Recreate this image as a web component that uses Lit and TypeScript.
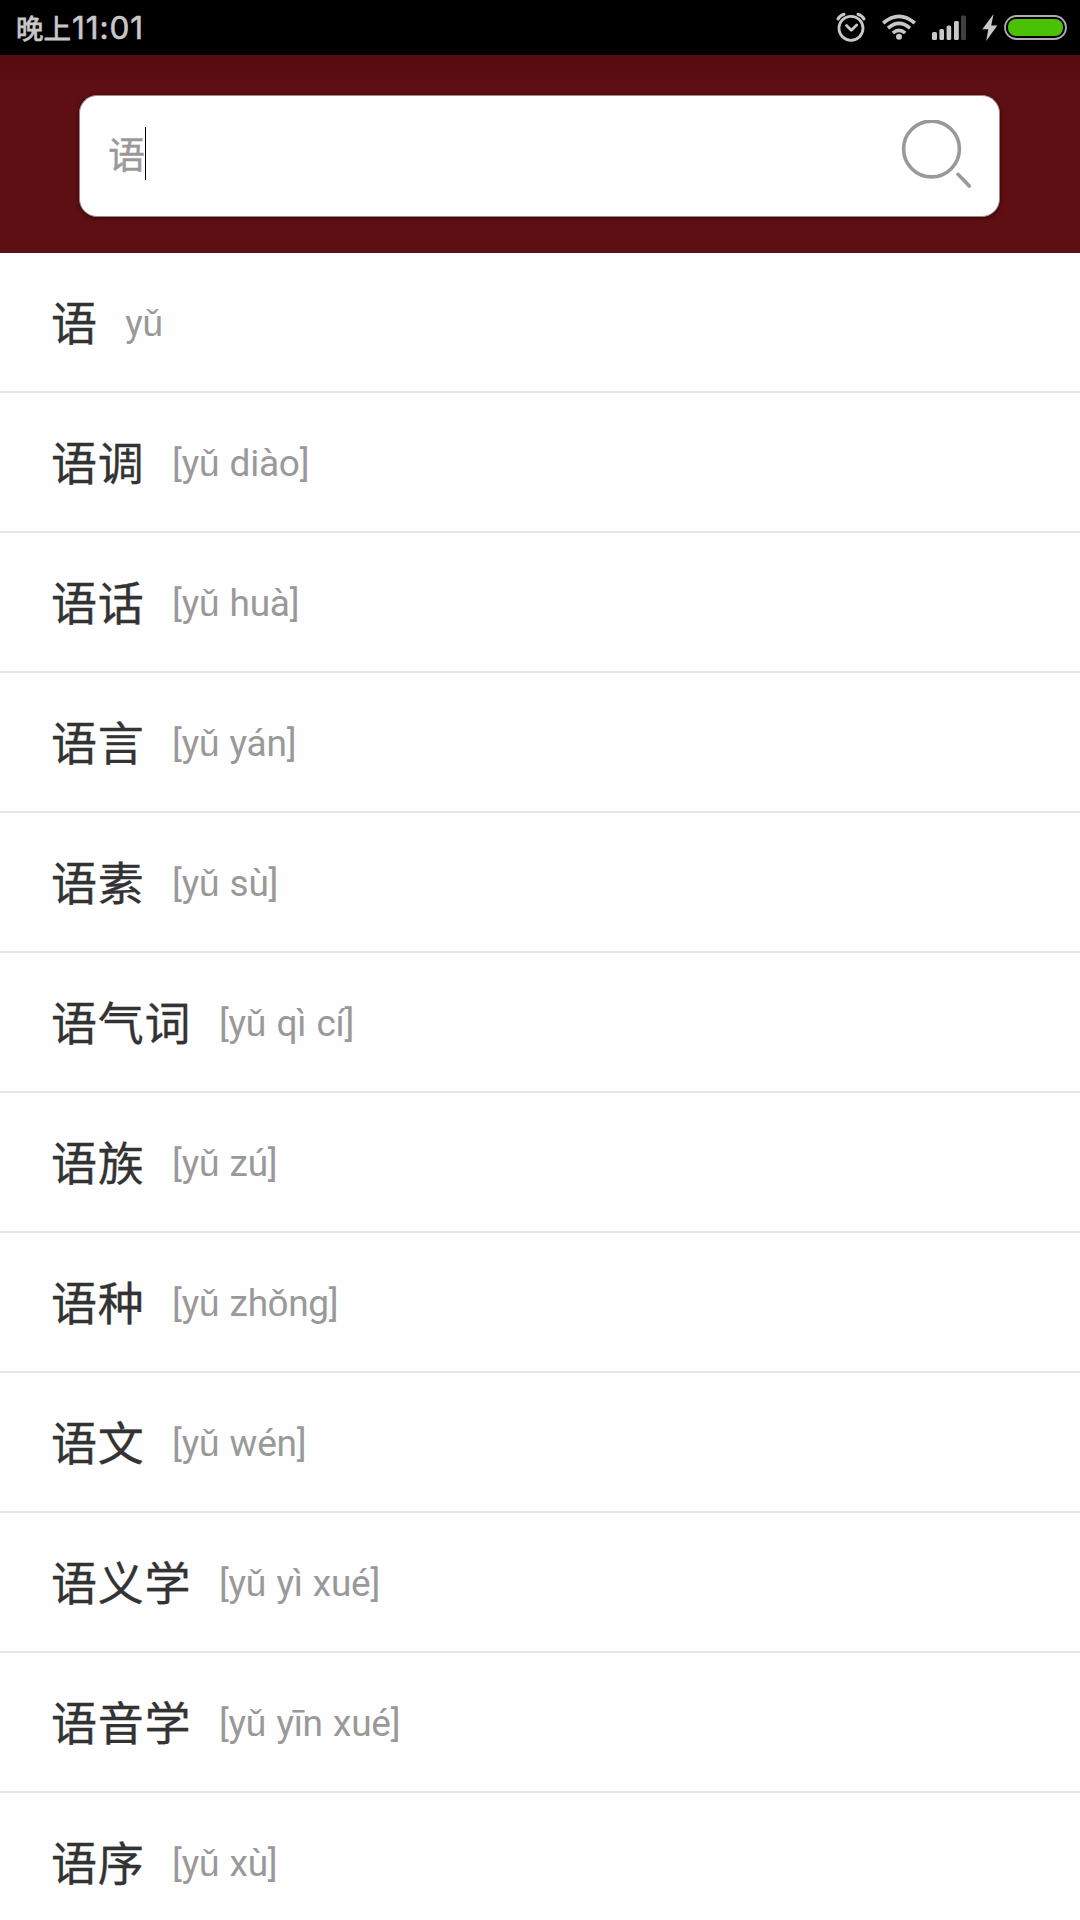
import { LitElement, html, css } from "lit";
import { customElement, state } from "lit/decorators.js";

interface Entry {
  word: string;
  pinyin: string;
}

const ENTRIES: Entry[] = [
  { word: "语", pinyin: "yǔ" },
  { word: "语调", pinyin: "[yǔ diào]" },
  { word: "语话", pinyin: "[yǔ huà]" },
  { word: "语言", pinyin: "[yǔ yán]" },
  { word: "语素", pinyin: "[yǔ sù]" },
  { word: "语气词", pinyin: "[yǔ qì cí]" },
  { word: "语族", pinyin: "[yǔ zú]" },
  { word: "语种", pinyin: "[yǔ zhǒng]" },
  { word: "语文", pinyin: "[yǔ wén]" },
  { word: "语义学", pinyin: "[yǔ yì xué]" },
  { word: "语音学", pinyin: "[yǔ yīn xué]" },
  { word: "语序", pinyin: "[yǔ xù]" },
];

@customElement("status-bar")
class StatusBar extends LitElement {
  static styles = css`
    :host {
      display: flex;
      align-items: center;
      justify-content: space-between;
      box-sizing: border-box;
      height: 55px;
      padding-left: 16px;
      background: #000;
      color: #c8c8c8;
    }
    .time {
      display: flex;
      align-items: center;
      white-space: nowrap;
    }
    .period {
      font: 27.5px/55px "Noto Sans CJK SC", sans-serif;
      -webkit-text-stroke: 0.8px #c8c8c8;
    }
    .clock {
      margin-left: 1px;
      font: 400 31.5px/56px Inter, sans-serif;
      letter-spacing: 0.9px;
      -webkit-text-stroke: 0.6px #c8c8c8;
    }
    .icons {
      display: block;
      width: 260px;
      height: 55px;
    }
  `;

  render() {
    return html`
      <div class="time"><span class="period">晚上</span><span class="clock">11:01</span></div>
      <svg class="icons" viewBox="0 0 260 55" fill="none" stroke="#c8c8c8">
        <g stroke-width="2.8" stroke-linecap="round" stroke-linejoin="round">
          <circle cx="31" cy="28.3" r="12" />
          <path d="M26.5 25.5L31.3 30.3L36.7 25" />
          <path d="M18 19Q19.7 15.5 24 14.2M44 19Q42.3 15.5 38 14.2" stroke-width="3" />
        </g>
        <g stroke-width="3.6">
          <path d="M63.2 23.2Q79 9.4 94.8 23.2" />
          <path d="M68 28.2Q79 18.6 90 28.2" />
          <path d="M72.8 33Q79 27.6 85.2 33" />
        </g>
        <circle cx="79" cy="36.8" r="3" fill="#c8c8c8" stroke="none" />
        <g fill="#c8c8c8" stroke="none">
          <rect x="112" y="32" width="5" height="8" rx="1.5" />
          <rect x="119.4" y="29" width="4.6" height="11" rx="1.5" />
          <rect x="126.6" y="25.5" width="4.6" height="14.5" rx="1.5" />
          <rect x="134" y="21" width="4.8" height="19" rx="1.5" />
          <rect x="141" y="15.5" width="5" height="24.5" rx="1.5" fill="#404040" />
          <path d="M173.6 14L162.3 29.2H168.3L166.2 41L177.3 25.4H171.2Z" />
        </g>
        <rect x="185" y="16" width="61" height="23" rx="11.5" stroke="#b0adb2" stroke-width="1.8" />
        <rect x="188" y="19" width="55" height="17" rx="8" fill="#4bc105" stroke="none" />
      </svg>
    `;
  }
}

@customElement("search-header")
class SearchHeader extends LitElement {
  static properties = { query: {} };
  declare query: string;

  static styles = css`
    :host {
      display: flex;
      justify-content: center;
      align-items: flex-start;
      box-sizing: border-box;
      height: 198px;
      padding: 40px 80px 0 79px;
      background: linear-gradient(#530c10, #5e0f13 30px);
    }
    .box {
      display: flex;
      align-items: center;
      flex: 1;
      box-sizing: border-box;
      height: 122px;
      padding: 0 27px 0 28px;
      border: 1px solid #a58789;
      border-radius: 18px;
      background: #fff;
      box-shadow: 0 1px 4px rgba(0, 0, 0, 0.5);
    }
    .query {
      margin-top: -6px;
      font: 37px/52px "Noto Sans CJK SC", sans-serif;
      color: #999;
      -webkit-text-stroke: 0.4px #999;
    }
    .caret {
      width: 1px;
      height: 53px;
      margin-top: -5px;
      background: #000;
    }
    .glass {
      display: block;
      width: 72px;
      height: 72px;
      margin-left: auto;
    }
  `;

  render() {
    return html`
      <div class="box">
        <span class="query">${this.query}</span><span class="caret"></span>
        <svg class="glass" viewBox="0 0 72 72" fill="none" stroke="#999" stroke-width="3.6">
          <circle cx="31.5" cy="29" r="27.9" />
          <path d="M58 54.3L69.3 66" stroke-linecap="round" />
        </svg>
      </div>
    `;
  }
}

@customElement("entry-row")
class EntryRow extends LitElement {
  static properties = { entry: { attribute: false } };
  declare entry: Entry;

  static styles = css`
    :host {
      display: flex;
      align-items: flex-start;
      box-sizing: border-box;
      height: 140px;
      padding: 0 51px;
      gap: 27.5px;
      border-bottom: 2px solid #e5e5e5;
      white-space: nowrap;
    }
    .word {
      font: 400 46px/134px "Noto Sans CJK SC", sans-serif;
      letter-spacing: 0.8px;
      color: #333;
      -webkit-text-stroke: 0.3px #333;
    }
    .pinyin {
      font: 400 37px/142px Roboto, sans-serif;
      letter-spacing: -0.25px;
      word-spacing: 1.4px;
      color: #999;
    }
  `;

  render() {
    return html`
      <span class="word">${this.entry.word}</span>
      <span class="pinyin">${this.entry.pinyin}</span>
    `;
  }
}

@customElement("app-root")
class AppRoot extends LitElement {
  static styles = css`
    :host {
      display: flex;
      flex-direction: column;
      width: 1080px;
      height: 1920px;
      overflow: hidden;
      background: #fff;
    }
    .bar,
    .search {
      flex: none;
    }
    .list {
      flex: 1;
      min-height: 0;
      overflow: hidden;
      background: #fefefe;
    }
  `;

  @state() private query = "语";

  render() {
    return html`
      <status-bar class="bar"></status-bar>
      <search-header class="search" .query=${this.query}></search-header>
      <div class="list" lang="zh-CN">
        ${ENTRIES.map((entry) => html`<entry-row .entry=${entry}></entry-row>`)}
      </div>
    `;
  }
}
